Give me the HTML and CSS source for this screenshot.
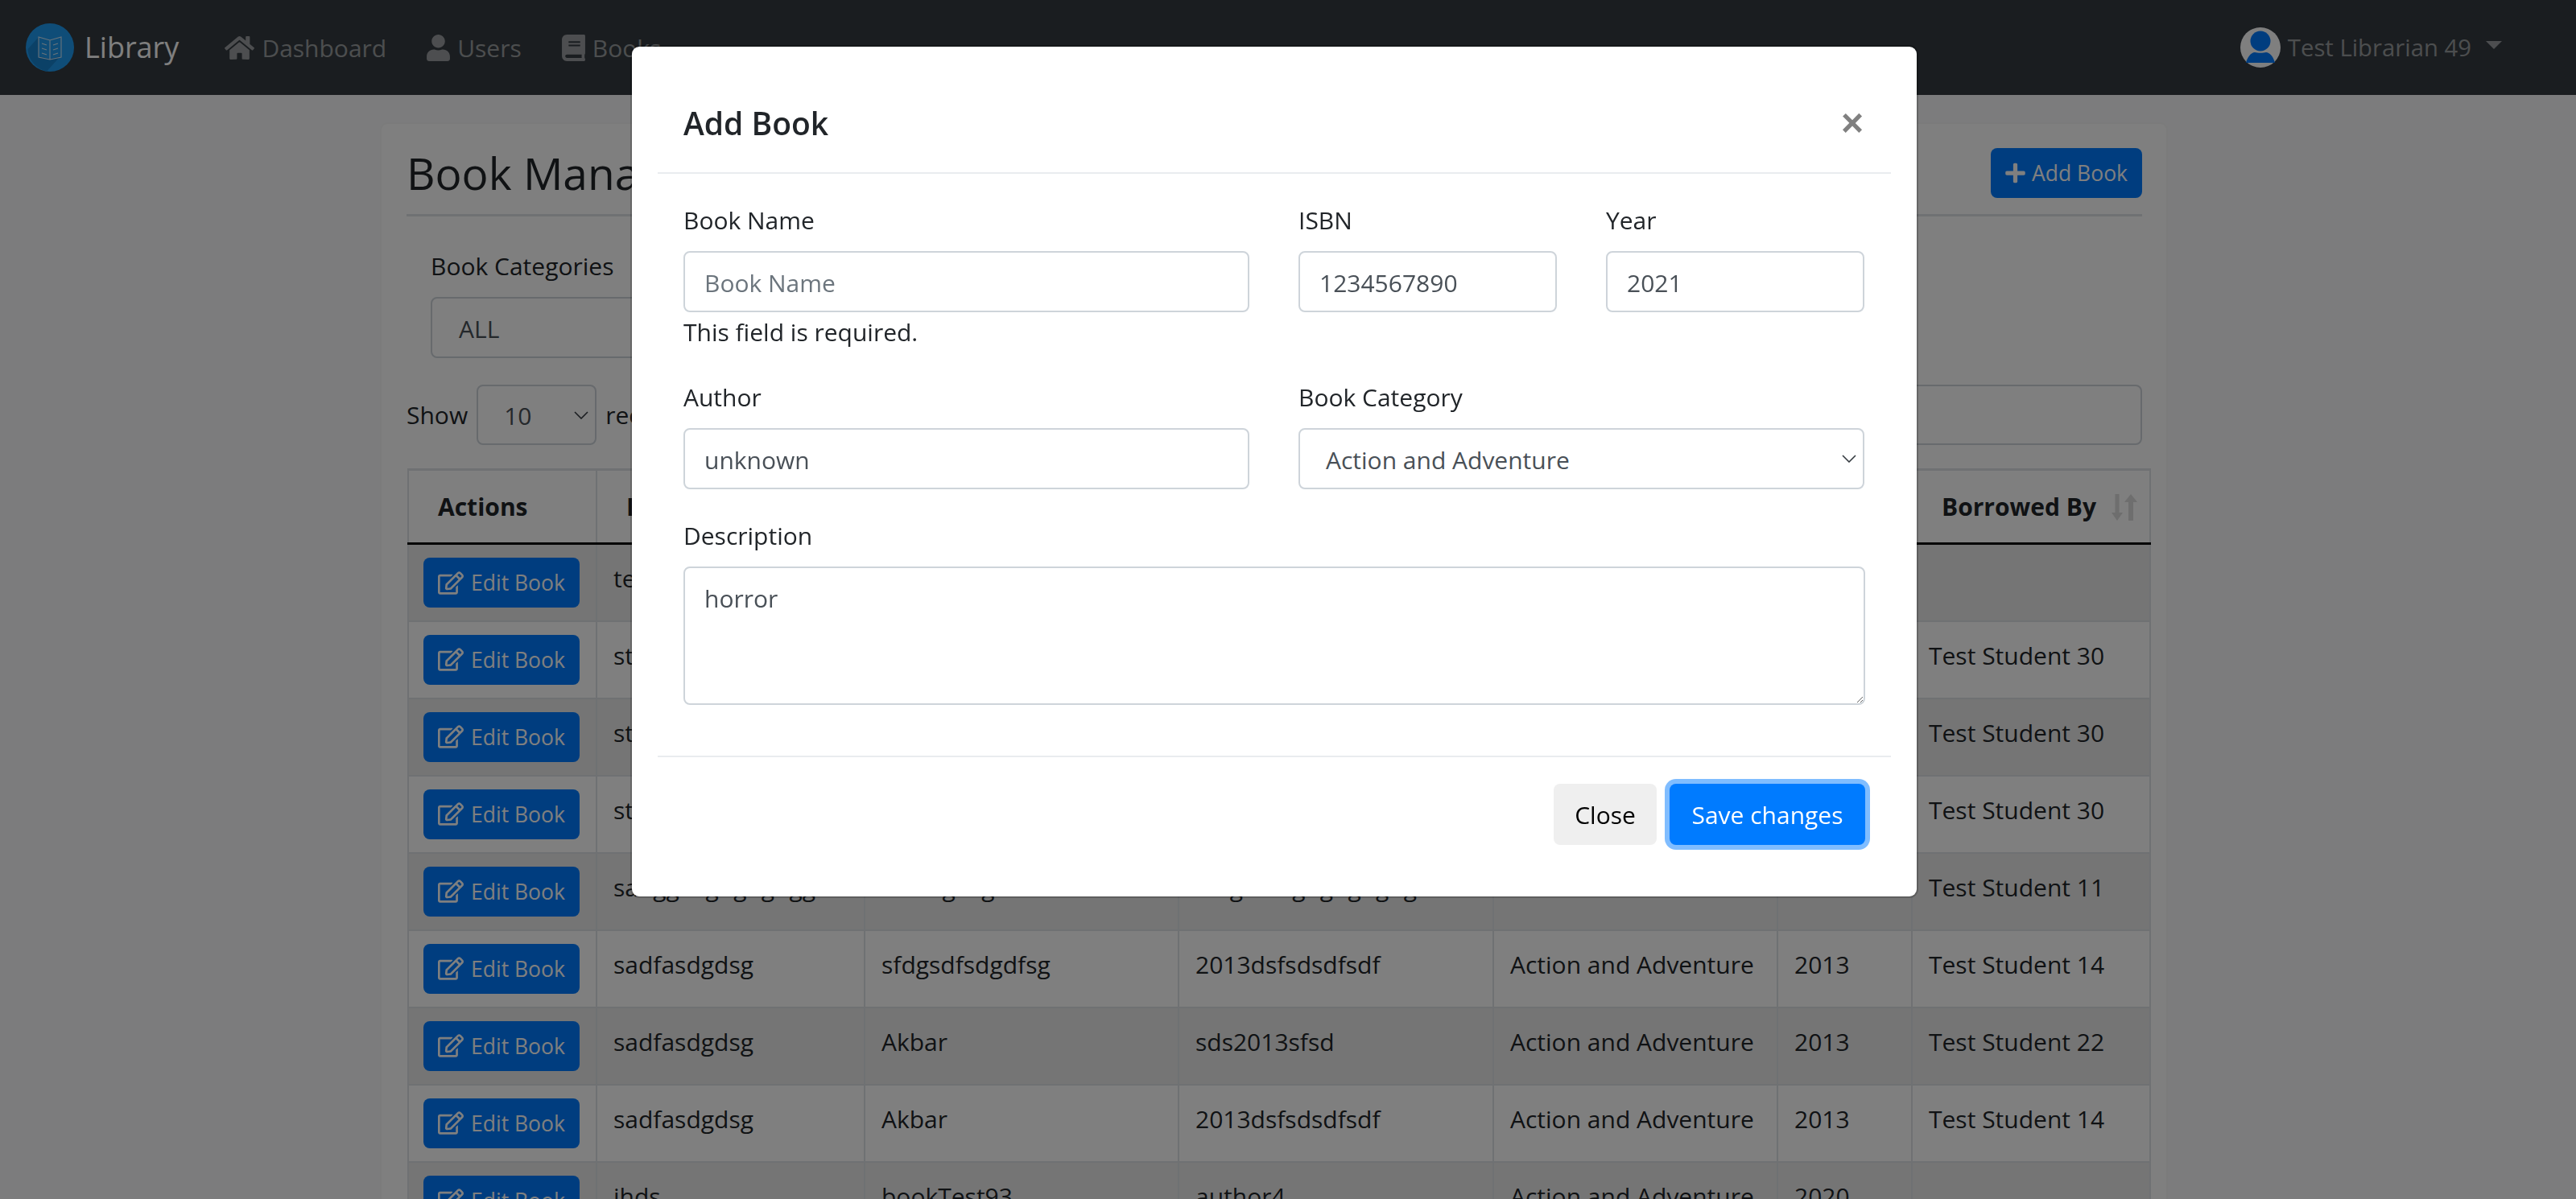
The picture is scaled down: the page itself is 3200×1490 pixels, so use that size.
FILE: index.html
```html
<!DOCTYPE html>
<html lang="en">
<head>
<meta charset="utf-8">
<title>Library</title>
<link rel="stylesheet" href="styles.css">
</head>
<body>
<svg class="defs" width="0" height="0">
  <symbol id="i-home" viewBox="0 0 576 512"><path d="M280.37 148.26L96 300.11V464a16 16 0 0 0 16 16l112.06-.29a16 16 0 0 0 15.92-16V368a16 16 0 0 1 16-16h64a16 16 0 0 1 16 16v95.64a16 16 0 0 0 16 16.05L464 480a16 16 0 0 0 16-16V300L295.67 148.26a12.19 12.19 0 0 0-15.3 0zM571.6 251.47L488 182.56V44.05a12 12 0 0 0-12-12h-56a12 12 0 0 0-12 12v72.61L318.47 43a48 48 0 0 0-61 0L4.34 251.47a12 12 0 0 0-1.6 16.9l25.5 31A12 12 0 0 0 45.15 301l235.22-193.74a12.19 12.19 0 0 1 15.3 0L530.9 301a12 12 0 0 0 16.9-1.6l25.5-31a12 12 0 0 0-1.7-16.93z"/></symbol>
  <symbol id="i-user" viewBox="0 0 448 512"><path d="M224 256c70.7 0 128-57.3 128-128S294.7 0 224 0 96 57.3 96 128s57.3 128 128 128zm89.6 32h-16.7c-22.2 10.2-46.9 16-72.9 16s-50.6-5.8-72.9-16h-16.7C60.2 288 0 348.2 0 422.4V464c0 26.5 21.5 48 48 48h352c26.5 0 48-21.5 48-48v-41.6c0-74.2-60.2-134.4-134.4-134.4z"/></symbol>
  <symbol id="i-book" viewBox="0 0 448 512"><path d="M448 360V24c0-13.3-10.7-24-24-24H96C43 0 0 43 0 96v320c0 53 43 96 96 96h328c13.3 0 24-10.7 24-24v-16c0-7.5-3.5-14.3-8.9-18.7-4.2-15.4-4.2-59.3 0-74.7 5.4-4.3 8.9-11.1 8.9-18.6zM128 134c0-3.3 2.7-6 6-6h212c3.3 0 6 2.7 6 6v20c0 3.3-2.7 6-6 6H134c-3.3 0-6-2.7-6-6v-20zm0 64c0-3.3 2.7-6 6-6h212c3.3 0 6 2.7 6 6v20c0 3.3-2.7 6-6 6H134c-3.3 0-6-2.7-6-6v-20zm253.4 250H96c-17.7 0-32-14.3-32-32 0-17.6 14.4-32 32-32h285.4c-1.9 17.1-1.9 46.9 0 64z"/></symbol>
  <symbol id="i-plus" viewBox="0 0 448 512"><path d="M416 208H272V64c0-17.67-14.33-32-32-32h-32c-17.67 0-32 14.33-32 32v144H32c-17.67 0-32 14.33-32 32v32c0 17.67 14.33 32 32 32h144v144c0 17.67 14.33 32 32 32h32c17.67 0 32-14.33 32-32V304h144c17.67 0 32-14.33 32-32v-32c0-17.67-14.33-32-32-32z"/></symbol>
  <symbol id="i-edit" viewBox="0 0 576 512"><path d="M402.3 344.9l32-32c5-5 13.7-1.5 13.7 5.7V464c0 26.5-21.5 48-48 48H48c-26.5 0-48-21.5-48-48V112c0-26.5 21.5-48 48-48h273.5c7.1 0 10.7 8.6 5.7 13.7l-32 32c-1.5 1.5-3.5 2.3-5.7 2.3H48v352h352V350.5c0-2.1.8-4.1 2.3-5.6zm156.6-201.8L296.3 405.7l-90.4 10c-26.2 2.9-48.5-19.2-45.6-45.6l10-90.4L432.9 17.1c22.9-22.9 59.9-22.9 82.7 0l43.2 43.2c22.9 22.9 22.9 60 .1 82.8zM460.1 174L402 115.9 216.2 301.8l-7.3 65.3 65.3-7.3L460.1 174zm64.8-79.7l-43.2-43.2c-4.1-4.1-10.8-4.1-14.8 0L436 82l58.1 58.1 30.9-30.9c4-4.2 4-10.8-.1-14.9z"/></symbol>
</svg>

<nav class="navbar">
  <a class="brand">
    <svg class="logo" viewBox="0 0 60 60"><circle cx="30" cy="30" r="30" fill="#1f9bf0"/><path d="M16 17L2.5 32A30 30 0 0 0 26 59.7L43 41 30 44l-14-3z" fill="#1783cf"/><path d="M16 17l14 4 14-4v25l-14 3-14-3zM30 21v24M20 25l6 2M20 31l6 2M20 37l6 2M40 25l-6 2M40 31l-6 2M40 37l-6 2" fill="none" stroke="#cfe6f7" stroke-width="1.1"/></svg>
    <span>Library</span>
  </a>
  <a class="nav-link"><svg class="nav-icon home"><use href="#i-home"/></svg>Dashboard</a>
  <a class="nav-link"><svg class="nav-icon"><use href="#i-user"/></svg>Users</a>
  <a class="nav-link"><svg class="nav-icon"><use href="#i-book"/></svg>Books</a>
  <a class="nav-user">
    <svg class="avatar" viewBox="0 0 50 50"><circle cx="25" cy="25" r="25" fill="#fff"/><circle cx="25" cy="17" r="12.5" fill="#007bff"/><path d="M7 44C9 36 14 31 18 31c3 1 11 1 14 0 4 0 9 5 11 13z" fill="#007bff"/></svg>
    <span>Test Librarian 49</span>
    <i class="caret"></i>
  </a>
</nav>

<main class="page">
  <section class="card">
    <header class="card-head">
      <h2 class="page-title">Book Management</h2>
      <button class="btn btn-primary btn-sm"><svg class="btn-icon plus"><use href="#i-plus"/></svg>Add Book</button>
    </header>
    <div class="filter">
      <label class="filter-label">Book Categories</label>
      <div class="fake-select filter-select">ALL</div>
    </div>
    <div class="dt-controls">
      <div class="dt-length">Show <div class="fake-select len-select">10<svg class="chev" viewBox="0 0 18 10"><path d="M1 1l8 8 8-8" fill="none" stroke="#343a40" stroke-width="1.6"/></svg></div> records</div>
      <div class="dt-search"></div>
    </div>
    <table class="table">
      <colgroup><col class="c1"><col class="c2"><col class="c3"><col class="c4"><col class="c5"><col class="c6"><col class="c7"></colgroup>
      <thead>
        <tr><th>Actions</th><th>Book Name</th><th>Author</th><th>ISBN</th><th>Category</th><th>Year</th><th>Borrowed By<svg class="sort" viewBox="0 0 32 33"><path d="M4.5 0h5v23H14l-7 10-7-10h4.5zM21 33h6V10h5L24 0l-8 10h5z"/></svg></th></tr>
      </thead>
      <tbody>
        <tr><td class="act"><button class="btn btn-primary btn-sm"><svg class="btn-icon"><use href="#i-edit"/></svg>Edit Book</button></td><td>test</td><td>unknown</td><td>1234567890</td><td>Action and Adventure</td><td>2021</td><td></td></tr>
        <tr><td class="act"><button class="btn btn-primary btn-sm"><svg class="btn-icon"><use href="#i-edit"/></svg>Edit Book</button></td><td>string</td><td>author</td><td>1234567890</td><td>Action and Adventure</td><td>2020</td><td>Test Student 30</td></tr>
        <tr><td class="act"><button class="btn btn-primary btn-sm"><svg class="btn-icon"><use href="#i-edit"/></svg>Edit Book</button></td><td>string</td><td>author</td><td>1234567890</td><td>Action and Adventure</td><td>2020</td><td>Test Student 30</td></tr>
        <tr><td class="act"><button class="btn btn-primary btn-sm"><svg class="btn-icon"><use href="#i-edit"/></svg>Edit Book</button></td><td>string</td><td>author</td><td>1234567890</td><td>Action and Adventure</td><td>2020</td><td>Test Student 30</td></tr>
        <tr><td class="act"><button class="btn btn-primary btn-sm"><svg class="btn-icon"><use href="#i-edit"/></svg>Edit Book</button></td><td>sadggdsgdgdgdgg</td><td>dsdsfgdsg</td><td>fdsgdsdfgdgdgdgdg</td><td></td><td></td><td>Test Student 11</td></tr>
        <tr><td class="act"><button class="btn btn-primary btn-sm"><svg class="btn-icon"><use href="#i-edit"/></svg>Edit Book</button></td><td>sadfasdgdsg</td><td>sfdgsdfsdgdfsg</td><td>2013dsfsdsdfsdf</td><td>Action and Adventure</td><td>2013</td><td>Test Student 14</td></tr>
        <tr><td class="act"><button class="btn btn-primary btn-sm"><svg class="btn-icon"><use href="#i-edit"/></svg>Edit Book</button></td><td>sadfasdgdsg</td><td>Akbar</td><td>sds2013sfsd</td><td>Action and Adventure</td><td>2013</td><td>Test Student 22</td></tr>
        <tr><td class="act"><button class="btn btn-primary btn-sm"><svg class="btn-icon"><use href="#i-edit"/></svg>Edit Book</button></td><td>sadfasdgdsg</td><td>Akbar</td><td>2013dsfsdsdfsdf</td><td>Action and Adventure</td><td>2013</td><td>Test Student 14</td></tr>
        <tr><td class="act"><button class="btn btn-primary btn-sm"><svg class="btn-icon"><use href="#i-edit"/></svg>Edit Book</button></td><td>jhds</td><td>bookTest93</td><td>author4</td><td>Action and Adventure</td><td>2020</td><td></td></tr>
      </tbody>
    </table>
  </section>
</main>

<div class="backdrop"></div>

<div class="modal-wrap">
  <div class="modal">
    <div class="modal-head">
      <h5 class="modal-title">Add Book</h5>
      <span class="modal-x">×</span>
    </div>
    <div class="modal-body">
      <div class="grid-row">
        <div class="field">
          <label>Book Name</label>
          <input class="control" placeholder="Book Name">
          <div class="help">This field is required.</div>
        </div>
        <div class="field">
          <label>ISBN</label>
          <input class="control" value="1234567890">
        </div>
        <div class="field">
          <label>Year</label>
          <input class="control" value="2021">
        </div>
      </div>
      <div class="grid-row two">
        <div class="field">
          <label>Author</label>
          <input class="control" value="unknown">
        </div>
        <div class="field">
          <label>Book Category</label>
          <div class="control select-control">Action and Adventure<svg class="chev" viewBox="0 0 18 10"><path d="M1 1l8 8 8-8" fill="none" stroke="#343a40" stroke-width="1.6"/></svg></div>
        </div>
      </div>
      <div class="field">
        <label>Description</label>
        <textarea class="control area">horror</textarea>
      </div>
    </div>
    <div class="modal-foot">
      <button class="btn btn-light">Close</button>
      <button class="btn btn-primary btn-focus">Save changes</button>
    </div>
  </div>
</div>
</body>
</html>
```
FILE: styles.css
```css
* { box-sizing: border-box; }
html, body { margin: 0; height: 100%; overflow: hidden; }
body { background: #f8f9fa; color: #212529; font-family: "Open Sans", "Noto Sans", sans-serif; font-size: 30px; line-height: 48px; }
.defs { display: block; height: 0; }

.navbar { height: 118px; background: #343a40; display: flex; align-items: center; padding: 0 32px; font-size: 30px; }
.brand { display: flex; align-items: center; gap: 13px; color: #fff; font-size: 36px; margin-right: 57px; }
.logo { width: 60px; height: 60px; }
.nav-link { display: flex; align-items: center; gap: 9px; color: rgba(255,255,255,.5); margin-right: 50px; padding-top: 2px; }
.nav-icon { width: 29px; height: 33px; margin-top: -2px; fill: rgba(255,255,255,.5); }
.nav-icon.home { width: 37px; }
.nav-user { display: flex; align-items: center; margin-left: auto; gap: 9px; color: rgba(255,255,255,.5); padding-right: 60px; font-size: 29.3px; }
.avatar { width: 50px; height: 50px; }
.caret { width: 0; height: 0; border: 10px solid transparent; border-top-color: rgba(255,255,255,.5); border-bottom: 0; margin-left: 9px; margin-top: -6px; }

.page { padding: 34px 35px 0 0; }
.card { width: 2221px; margin: 0 auto; background: #fff; border: 2px solid rgba(0,0,0,.03); border-radius: 10px; padding: 30px 30px 0 31px; }
.card-head { display: flex; align-items: center; justify-content: space-between; box-sizing: content-box; height: 62px; border-bottom: 3px solid #dee2e6; padding-bottom: 20px; }
.page-title { margin: 0; font-size: 55px; font-weight: 400; line-height: 62px; }

.btn { font-family: inherit; border: 0; border-radius: 8px; display: inline-flex; align-items: center; justify-content: center; }
.btn-primary { background: #007bff; color: #fff; }
.btn-sm { font-size: 26.5px; height: 62px; padding: 0 18px; }
.btn-icon { width: 32px; height: 29px; fill: #fff; margin-right: 9px; flex: none; }
.btn-icon.plus { width: 25px; height: 28px; margin-right: 8px; }

.filter { padding: 38px 30px 0; }
.filter-label { display: block; line-height: 48px; margin-bottom: 14px; }
.fake-select { background: #fff; border: 2px solid #ced4da; border-radius: 8px; color: #495057; display: flex; align-items: center; position: relative; padding-top: 3px; }
.filter-select { width: 600px; height: 76px; padding-left: 33px; }
.dt-controls { display: flex; justify-content: space-between; align-items: center; margin-top: 33px; }
.dt-length { display: flex; align-items: center; gap: 11px; }
.len-select { width: 149px; height: 75px; padding-left: 32px; }
.chev { position: absolute; right: 8px; top: 50%; width: 18px; height: 10px; margin-top: -5px; }
.dt-search { width: 800px; height: 75px; border: 2px solid #ced4da; border-radius: 8px; background: #fff; }

.table { border-collapse: collapse; table-layout: fixed; width: 2164px; margin: 29px 0 0 1px; }
.c1 { width: 234px; } .c2 { width: 333px; } .c3 { width: 390px; } .c4 { width: 391px; } .c5 { width: 353px; } .c6 { width: 167px; } .c7 { width: 296px; }
.table th, .table td { border: 2px solid #dee2e6; text-align: left; vertical-align: top; }
.table th { height: 92px; font-weight: 700; border-top-width: 3px; border-bottom: 3px solid #0a0a0a; padding: 0 20px 0 36px; vertical-align: middle; position: relative; }
.table td { height: 96px; padding: 18px 20px; line-height: 48px; }
.table td.act { padding: 16px 18px 14px; }
.table tbody tr:nth-child(odd) { background: rgba(0,0,0,.08); }
.sort { position: absolute; right: 15px; top: 50%; margin-top: -16px; width: 32px; height: 33px; fill: #dcdcdc; }

.backdrop { position: fixed; inset: 0; background: rgba(0,0,0,.5); }
.modal-wrap { position: fixed; inset: 0; padding: 56px 34px 0 0; display: flex; justify-content: center; align-items: flex-start; }
.modal { width: 1600px; height: 1060px; background: #fff; background-clip: padding-box; border: 2px solid rgba(0,0,0,.2); border-radius: 11px; padding: 0 32px; }
.modal-head { display: flex; align-items: center; justify-content: space-between; height: 158px; border-bottom: 2px solid #e9ecef; padding: 34px 34px 0 32px; }
.modal-title { margin: 0; font-size: 39px; font-weight: 600; line-height: 60px; }
.modal-x { font-size: 48px; font-weight: 700; color: #808080; line-height: 1; font-family: "Liberation Sans", sans-serif; }
.modal-body { padding: 34px 32px 0; height: 725px; border-bottom: 2px solid #e9ecef; }
.grid-row { display: grid; grid-template-columns: 703px 321px 321px; column-gap: 61px; }
.grid-row.two { grid-template-columns: 703px 703px; column-gap: 61px; }
.field { display: block; }
.field label { display: block; line-height: 48px; margin-bottom: 14px; }
.grid-row .field { min-height: 220px; }
.grid-row.two .field { min-height: 172px; }
.control { display: block; width: 100%; height: 76px; border: 2px solid #ced4da; border-radius: 8px; padding: 3px 24px 0; font: inherit; color: #495057; background: #fff; outline: 0; }
.control::placeholder { color: #6c757d; }
.help { line-height: 48px; margin-top: 1px; }
.select-control { display: flex; align-items: center; position: relative; padding: 3px 32px 0; }
.area { height: 172px; padding: 14px 24px; resize: vertical; line-height: 48px; }
.modal-foot { display: flex; justify-content: flex-end; gap: 16px; padding: 33px 32px 0; }
.modal-foot .btn { height: 76px; font-size: 30px; }
.btn-light { width: 128px; background: #efefef; color: #000; }
.btn-focus { width: 243px; box-shadow: 0 0 0 6px #80bdff; }
```
